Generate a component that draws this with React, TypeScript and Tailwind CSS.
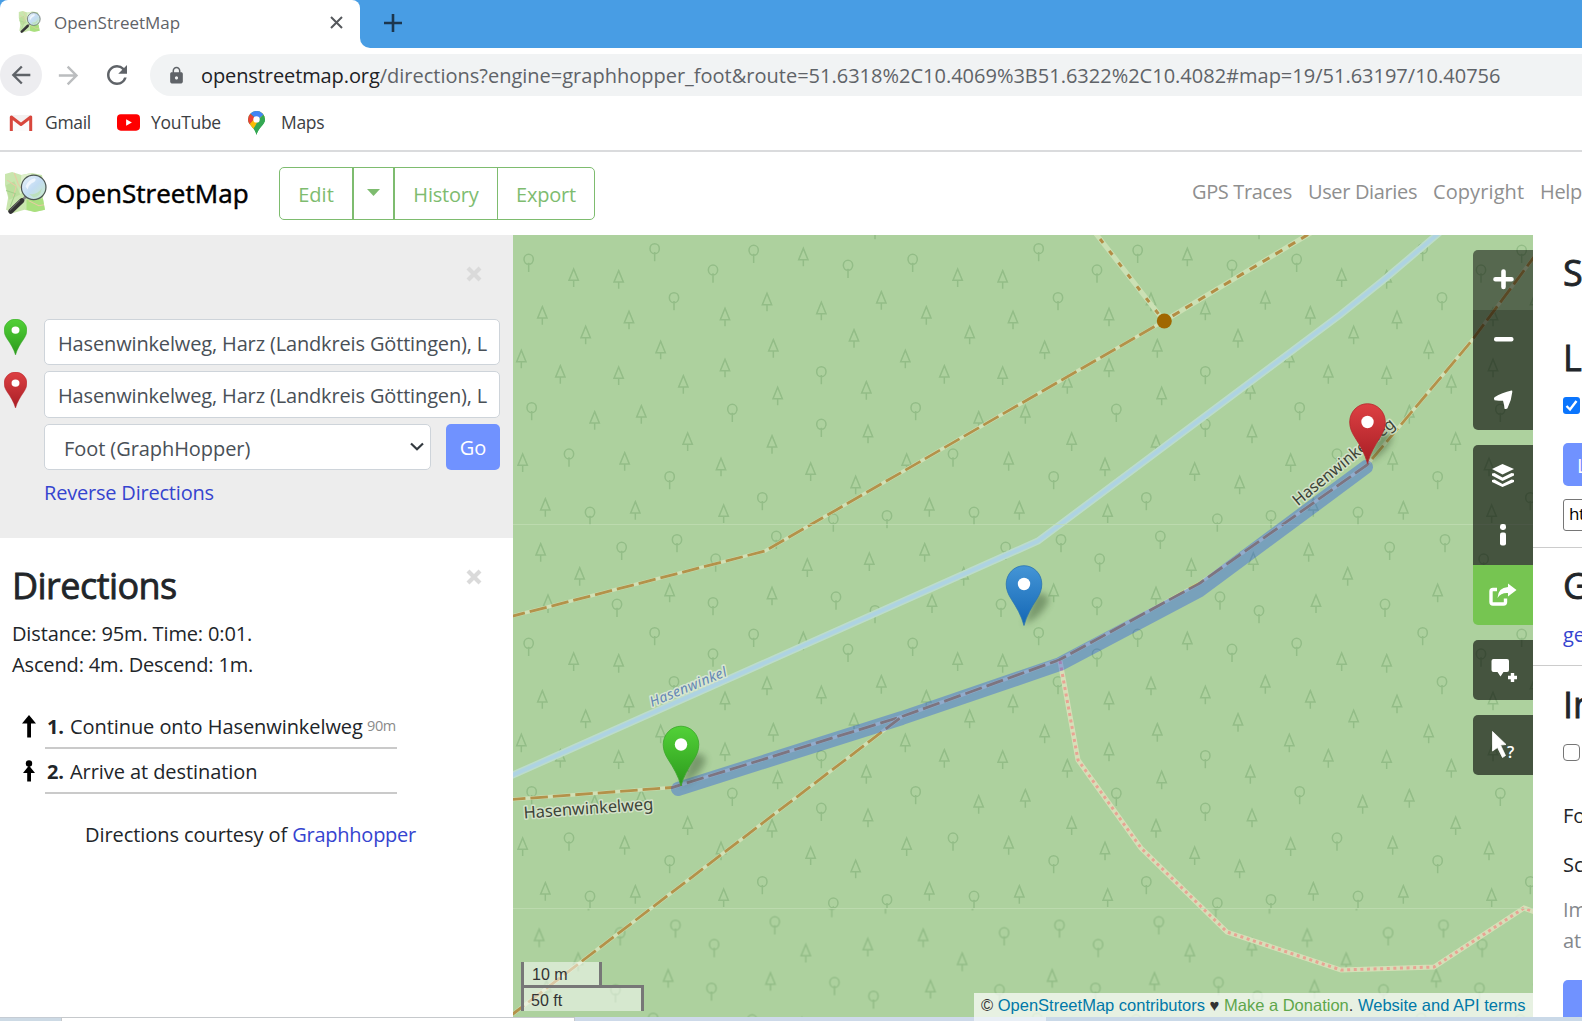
import type { ReactNode } from "react";
import { MdArrowBack, MdArrowForward, MdLock, MdRefresh } from "react-icons/md";

function OsmLogo({ className }: { className: string }) {
  return (
    <svg className={className} viewBox="0 0 42 43">
      <defs>
        <linearGradient id="osmLens" x1="0" y1="0" x2="1" y2="1">
          <stop offset="0" stopColor="#eaf3fb" />
          <stop offset=".5" stopColor="#c3dcf3" />
          <stop offset="1" stopColor="#c9ecc4" />
        </linearGradient>
      </defs>
      <path d="M1 2 L8 0 L17 3 L27 1 L37 3 L40 15 L38 26 L40 37 L30 39 L20 37 L9 40 L2 37 L4 25 L1 13 Z" fill="#c9e6ae" />
      <path d="M17 3 L27 1 L26 14 L15 22 Z" fill="#def0cc" />
      <path d="M2 13 L10 9 L16 22 L5 27 Z" fill="#bbdf9d" />
      <path d="M22 27 L38 26 L40 37 L30 39 L22 37 Z" fill="#a9e07e" />
      <path d="M3 8 L12 14 L9 24 M10 1 L14 12 L20 20 M24 28 L34 33 L39 32" stroke="#e9c9a4" strokeWidth="1" fill="none" />
      <path d="M2 18 L11 21 L6 34" stroke="#a3cf8b" strokeWidth="1" fill="none" />
      <path d="M21.500 24 L17 28.500" stroke="#888" strokeWidth="2.600" />
      <path d="M17.500 28 L6.500 38.500" stroke="#333" strokeWidth="4.800" strokeLinecap="round" />
      <path d="M15.500 27.500 L5.500 37.500" stroke="#6c6c6c" strokeWidth="1" />
      <circle cx="29" cy="15" r="12" fill="url(#osmLens)" stroke="#4c5653" strokeWidth="1.200" />
      <path d="M21 14 Q24 7 30 6 Q33 8 27 11 Q24 13 23 17 Z" fill="#f4f9ff" opacity=".85" />
      <path d="M24 21 Q31 24 37 16 Q36 24 29 25 Z" fill="#b9e0b4" opacity=".8" />
    </svg>
  );
}

const pinColors = {
  green: ["#52d138", "#2c9a1c", "#3aa62a"],
  red: ["#dd4043", "#a81e25", "#b5272c"],
  blue: ["#4495d6", "#1467b5", "#2a74b0"],
};
type PinColor = keyof typeof pinColors;

/* Teardrop marker whose tip sits at (18, 59) of its own coordinates. */
function PinShape({ color }: { color: PinColor }) {
  const [top, bottom, edge] = pinColors[color];
  return (
    <g>
      <defs>
        <linearGradient id={"pin-" + color} x1="0" y1="0" x2="0" y2="1">
          <stop offset="0" stopColor={top} />
          <stop offset="1" stopColor={bottom} />
        </linearGradient>
      </defs>
      <path
        d="M18 60 C15.500 50 10 41 5.500 34 C2 28.500 .2 24 .2 18.500 A17.800 18.300 0 0 1 35.800 18.500 C35.800 24 34 28.500 30.500 34 C26 41 20.500 50 18 60 Z"
        fill={"url(#pin-" + color + ")"}
        stroke={edge}
        strokeWidth=".8"
      />
      <circle cx="18" cy="18.500" r="6.200" fill="#fff" />
    </g>
  );
}

const broadleaf = [
  [50, 73], [428, 41], [603, 105], [725, 46], [1008, 91], [486, 188], [59, 518], [661, 523], [928, 410], [928, 568],
  [171, 657], [473, 725], [751, 788], [234, 832], [964, 852], [1125, 842], [495, 914], [329, 937], [793, 904],
  [611, 972], [315, 1108], [603, 1103], [972, 1086], [1089, 1127], [1089, -25],
];
const conifer = [
  [185, 98], [320, 103], [874, 36], [91, 211], [221, 270], [351, 225], [446, 315], [639, 216], [765, 171], [784, 310],
  [639, 369], [928, 198], [1108, 166], [1026, 280], [28, 342], [145, 388], [320, 392], [514, 418], [797, 453],
  [1063, 436], [248, 526], [388, 508], [527, 590], [780, 598], [1068, 567], [32, 653], [338, 649], [627, 666],
  [896, 680], [1031, 720], [100, 787], [370, 796], [635, 806], [86, 922], [203, 994], [1072, 950], [886, 968],
  [108, 1076], [473, 1044], [780, 1053],
];

function ForestPattern({ id, x, y }: { id: string; x: number; y: number }) {
  return (
    <pattern id={id} x={x} y={y} width="384" height="384" patternUnits="userSpaceOnUse">
      <g transform="scale(.33333)" fill="none" stroke="#93bd87" strokeWidth="4.600">
        {broadleaf.map(([cx, cy], i) => (
          <path key={i} d={`M${cx - 14} ${cy} a14 15 0 1 1 28 0 a14 15 0 1 1 -28 0 M${cx} ${cy + 10} v28`} />
        ))}
        {conifer.map(([cx, cy], i) => (
          <path key={i} d={`M${cx} ${cy + 4} L${cx + 14} ${cy + 38} H${cx - 14} Z M${cx} ${cy + 38} v20`} />
        ))}
      </g>
    </pattern>
  );
}

function MapMarker({ color, x, y }: { color: PinColor; x: number; y: number }) {
  return (
    <g>
      <path
        d={`M${x} ${y} L${x + 10} ${y - 30} Q${x + 22} ${y - 34} ${x + 25} ${y - 25} Q${x + 20} ${y - 9} ${x} ${y} Z`}
        fill="#2d4a25"
        opacity=".42"
        filter="url(#shade)"
      />
      <g transform={`translate(${x - 18} ${y - 59})`}>
        <PinShape color={color} />
      </g>
    </g>
  );
}

const trackA = "M505 618 L765 551 L1164 321";
const trackB = "M505 800 L672 787.500 L902 716.500 L1059 660 L1200 583 L1367 465 L1471.500 341 L1540 249";
const trackC = "M902 716.500 L505 1020";
const stream = "M505 778.500 L1038 541 L1340 315 L1386 278 L1446 227";
const footway = "M1060 661 L1078 760 L1141 848 L1227 932 L1341 970 L1434 967 L1524 908 L1540 914";

function MapCanvas() {
  return (
    <svg className="block h-[782px] w-[1020px]" viewBox="513 235 1020 782">
      <defs>
        <ForestPattern id="forest" x={512} y={235} />
        <ForestPattern id="forestLow" x={510.5} y={236.5} />
        <filter id="shade" x="-50%" y="-50%" width="200%" height="200%">
          <feGaussianBlur stdDeviation="3.500" />
        </filter>
      </defs>
      <rect x="513" y="235" width="1020" height="782" fill="#add19e" />
      <rect x="513" y="235" width="1020" height="673" fill="url(#forest)" />
      <rect x="513" y="908" width="1020" height="109" fill="url(#forestLow)" />

      <g fill="none">
        <path d={stream} stroke="#bcdccb" strokeWidth="7" />
        <path d={stream} stroke="#aed3e2" strokeWidth="3.800" />
        <path d="M1164 321 L1086 221" stroke="#cbe0b4" strokeWidth="5" />
        <path d="M1164 321 L1324 225" stroke="#cbe0b4" strokeWidth="5" />
        <path d="M1164 321 L1086 221" stroke="#b38d45" strokeWidth="3" strokeDasharray="5 10" strokeDashoffset="-9" />
        <path d="M1164 321 L1324 225" stroke="#b38d45" strokeWidth="3" strokeDasharray="8 7" strokeDashoffset="-10" />
        {[trackA, trackB, trackC].map((d) => (
          <g key={d}>
            <path d={d} stroke="#d0e0b6" strokeWidth="3.600" />
            <path d={d} stroke="#b3924a" strokeWidth="2.800" strokeDasharray="17.500 5" strokeDashoffset="-3" />
          </g>
        ))}
        <path d={footway} stroke="#d6dfb8" strokeWidth="5" />
        <path d={footway} stroke="#e8a493" strokeWidth="3" strokeDasharray="3 3.600" />
      </g>
      <circle cx="1164.300" cy="321" r="7.500" fill="#a06800" />

      <path d="M513 524.500 H1533 M513 908.500 H1533" stroke="#c3dfb6" strokeWidth="1" opacity=".7" />

      <g className="font-['Noto_Sans']" paintOrder="stroke" strokeLinejoin="round">
        <text transform="translate(652 707) rotate(-22.500)" fontSize="14" fontStyle="italic" textLength="82" fill="#6487b5" stroke="#d7e6d0" strokeWidth="3">
          Hasenwinkel
        </text>
        <text transform="translate(524 818.500) rotate(-4)" fontSize="16.500" textLength="130" fill="#3d4438" stroke="#d3e2c8" strokeWidth="3">
          Hasenwinkelweg
        </text>
        <text transform="translate(1298 506.500) rotate(-39.500)" fontSize="16" textLength="127" fill="#3d4438" stroke="#d3e2c8" strokeWidth="3">
          Hasenwinkelweg
        </text>
      </g>

      <path
        d="M678 789 L902 718 L1060 664 L1200 590 L1366 467"
        fill="none"
        stroke="#0033ff"
        strokeOpacity=".3"
        strokeWidth="14"
        strokeLinecap="round"
        strokeLinejoin="round"
      />
      <MapMarker color="blue" x={1024} y={624.5} />
      <MapMarker color="green" x={681} y={785} />
      <MapMarker color="red" x={1367.5} y={462.5} />
    </svg>
  );
}

function ControlIcon({ children }: { children: ReactNode }) {
  return (
    <svg className="h-[60px] w-[60px]" viewBox="0 0 60 60" fill="#fff">
      {children}
    </svg>
  );
}

function MapControls() {
  return (
    <div className="absolute top-[15px] right-0 flex w-[60px] flex-col gap-[15px]">
      <div className="flex flex-col overflow-hidden rounded-l-[5px]">
        <button className="h-[60px] bg-black/50">
          <ControlIcon>
            <path d="M30.500 21.500 V37 M22.500 29.200 H38.500" stroke="#fff" strokeWidth="4.600" strokeLinecap="round" />
          </ControlIcon>
        </button>
        <button className="h-[60px] bg-black/60">
          <ControlIcon>
            <rect x="21" y="27" width="19.500" height="4.600" rx="2" />
          </ControlIcon>
        </button>
        <button className="h-[60px] bg-black/60">
          <ControlIcon>
            <path d="M38.500 20.600 Q39.500 20.500 39.300 22 Q38.600 30 34.500 38.300 Q33.500 39.500 31.500 38.800 Q31.300 35 30 30.800 Q26 30.800 21.500 30.300 Q20.300 28.500 21.500 27.300 Q29 22.500 38.500 20.600 Z" />
          </ControlIcon>
        </button>
      </div>
      <div className="flex flex-col overflow-hidden rounded-l-[5px]">
        <button className="h-[60px] bg-black/60">
          <ControlIcon>
            <path d="M29.500 19 L41 24 L29.500 29.500 L19 24 Z" />
            <path d="M19 28.500 L21.500 28 L29.500 32.500 L38.500 28 L41 28.500 V30.500 L29.500 36 L19 30.500 Z" />
            <path d="M19 35 L21.500 34.500 L29.500 39 L38.500 34.500 L41 35 V37 L29.500 42 L19 37 Z" />
          </ControlIcon>
        </button>
        <button className="h-[60px] bg-black/60">
          <ControlIcon>
            <rect x="27" y="19" width="6" height="6" rx="2.400" />
            <rect x="27" y="27.500" width="6" height="13" rx="2" />
          </ControlIcon>
        </button>
        <button className="h-[60px] bg-[#76c551]">
          <ControlIcon>
            <path d="M24 24.500 H20 Q18 24.500 18 26.500 V37 Q18 39 20 39 H30.500 Q32.500 39 32.500 37 V33.500" fill="none" stroke="#fff" strokeWidth="3.400" />
            <path d="M35 18.500 L43.500 25 L35 31.500 V28 Q28 27.500 24.500 33 Q25 22.500 35 22 Z" />
          </ControlIcon>
        </button>
      </div>
      <button className="h-[60px] overflow-hidden rounded-l-[5px] bg-black/60">
        <ControlIcon>
          <path d="M20.500 19 H34 Q36 19 36 21 V30 Q36 32 34 32 H30.500 L27.500 36.500 L24.500 32 H20.500 Q18.500 32 18.500 30 V21 Q18.500 19 20.500 19 Z" />
          <path d="M39.500 33 V42 M35 37.500 H44" stroke="#fff" strokeWidth="3.400" />
        </ControlIcon>
      </button>
      <button className="h-[60px] overflow-hidden rounded-l-[5px] bg-black/60">
        <ControlIcon>
          <path d="M19.500 16.500 L33 29.500 L27.500 30 L32.500 40.500 L29.500 42.500 L24.500 32.500 L19.500 36 Z" stroke="#fff" strokeWidth=".8" />
          <text x="34" y="43" fontSize="16" fontWeight="600" className="font-['Open_Sans']">
            ?
          </text>
        </ControlIcon>
      </button>
    </div>
  );
}

function CloseIcon() {
  return (
    <svg className="h-[16px] w-[16px]" viewBox="0 0 16 16">
      <path d="M2 2 L14 14 M14 2 L2 14" stroke="#dadada" strokeWidth="4.200" />
    </svg>
  );
}

function SidePin({ color }: { color: PinColor }) {
  return (
    <svg className="ml-[4px] h-[36px] w-[23px] shrink-0" viewBox="0 0 36 60" preserveAspectRatio="none">
      <PinShape color={color} />
    </svg>
  );
}

function BrowserChrome() {
  return (
    <>
      <div className="flex h-[48px] bg-white">
        <div className="flex w-[360px] bg-[#489de4]">
          <div className="flex flex-1 items-center rounded-t-[8px] bg-white pb-[3px] pl-[18px]">
            <OsmLogo className="h-[23px] w-[23px]" />
            <span className="ml-[13px] text-[17px] text-[#5f6368]">OpenStreetMap</span>
            <svg className="ml-auto mr-[17px] h-[13px] w-[13px]" viewBox="0 0 13 13">
              <path d="M1 1 L12 12 M12 1 L1 12" stroke="#55585c" strokeWidth="2" />
            </svg>
          </div>
        </div>
        <div className="flex flex-1 items-center rounded-bl-[10px] bg-[#489de4] pb-[3px] pl-[24px]">
          <svg className="h-[18px] w-[18px]" viewBox="0 0 18 18">
            <path d="M9 0 V18 M0 9 H18" stroke="#1c364d" strokeWidth="2.600" />
          </svg>
        </div>
      </div>
      <div className="flex h-[54px] items-center text-[#5f6368]">
        <div className="flex h-[42px] w-[42px] items-center justify-center rounded-full bg-[#ededf0]">
          <MdArrowBack className="mr-[1px] h-[28px] w-[28px]" />
        </div>
        <MdArrowForward className="ml-[12px] h-[29px] w-[29px] text-[#bbbdbf]" />
        <MdRefresh className="ml-[19px] h-[30px] w-[30px]" />
        <div className="ml-[18px] flex h-[42px] flex-1 items-center rounded-l-full bg-[#f1f3f4] pl-[17px]">
          <MdLock className="h-[19px] w-[19px]" />
          <span className="ml-[15px] pt-[2px] text-[20px] whitespace-nowrap">
            <span className="tracking-[-0.1px] text-[#202124]">openstreetmap.org</span>
            /directions?engine=graphhopper_foot&amp;route=51.6318%2C10.4069%3B51.6322%2C10.4082#map=19/51.63197/10.40756
          </span>
        </div>
      </div>
      <div className="flex h-[50px] items-center border-b-2 border-[#dadbdd] pb-[7px] pl-[9px] text-[17.5px] tracking-[-0.3px] text-[#3c4043]">
        <svg className="h-[18px] w-[24px]" viewBox="0 0 24 18">
          <rect x="1" y="1" width="22" height="16" rx="1.500" fill="#f3f1f1" />
          <path d="M4 17 V6 L12 12 L20 6 V17" fill="#fbfbfb" />
          <path d="M2.300 17 V3 L12 10.500 L21.700 3 V17" fill="none" stroke="#d8473d" strokeWidth="3" strokeLinejoin="round" />
        </svg>
        <span className="ml-[12px] w-[48px]">Gmail</span>
        <svg className="ml-[24px] h-[17px] w-[23px]" viewBox="0 0 24 17">
          <rect width="24" height="17" rx="4" fill="#f00" />
          <path d="M9.500 5 L15.500 8.500 L9.500 12 Z" fill="#fff" />
        </svg>
        <span className="ml-[11px] w-[70px]">YouTube</span>
        <svg className="ml-[27px] h-[24px] w-[17px]" viewBox="0 0 17 24">
          <defs>
            <clipPath id="mapsPin">
              <path d="M8.500 0 A8.500 8.500 0 0 1 17 8.500 C17 14 10.500 16 8.500 24 C6.500 16 0 14 0 8.500 A8.500 8.500 0 0 1 8.500 0 Z" />
            </clipPath>
          </defs>
          <g clipPath="url(#mapsPin)">
            <rect width="17" height="24" fill="#34a853" />
            <path d="M0 14 L17 -3 V6 L3 20 H0 Z" fill="#fbbc04" />
            <path d="M2 2 L9 9 L17 3 V-2 H0 Z" fill="#4285f4" />
            <path d="M0 0 L2 2.500 L7 7 L0 15 Z" fill="#ea4335" />
            <path d="M11 8 L17 2 V13 L8.500 24 L6 17 Z" fill="#34a853" />
          </g>
          <circle cx="8.500" cy="8.400" r="3.200" fill="#fff" />
        </svg>
        <span className="ml-[16px]">Maps</span>
      </div>
    </>
  );
}

function SiteHeader() {
  return (
    <header className="flex h-[83px] shrink-0 items-center pl-[4px]">
      <OsmLogo className="h-[44px] w-[43px] shrink-0" />
      <h1 className="ml-[8px] w-[224px] shrink-0 text-[26px] tracking-[0.05px] text-black [-webkit-text-stroke:0.5px_#000]">OpenStreetMap</h1>
      <div className="flex h-[53px] w-[316px] shrink-0 rounded-[5px] border-[1.500px] border-[#7ebc6f] text-[20px] text-[#7ebc6f]">
        <button className="w-[74px] border-r-2 border-[#7ebc6f] pt-[2px]">Edit</button>
        <button className="flex w-[41px] items-center justify-center border-r-2 border-[#7ebc6f] pb-[2px]">
          <svg className="h-[7px] w-[13px]" viewBox="0 0 13 7">
            <path d="M0 0 H13 L6.500 7 Z" fill="#7ebc6f" />
          </svg>
        </button>
        <button className="w-[103px] border-r border-[#7ebc6f] pt-[2px] tracking-[-0.2px]">History</button>
        <button className="flex-1 pt-[2px] tracking-[-0.2px]">Export</button>
      </div>
      <nav className="ml-[597px] flex w-[390px] shrink-0 gap-[16px] overflow-hidden pb-[4px] text-[20px] whitespace-nowrap text-[#8f8f8f]">
        <a className="w-[100px] tracking-[-0.35px]">GPS Traces</a>
        <a className="w-[109px] tracking-[-0.35px]">User Diaries</a>
        <a className="w-[91px] tracking-[0.1px]">Copyright</a>
        <a className="tracking-[-0.3px]">Help</a>
      </nav>
    </header>
  );
}

function Sidebar() {
  return (
    <aside className="w-[513px] shrink-0 text-[20px] tracking-[-0.07px] whitespace-nowrap text-[#212529]">
      <div className="h-[303px] bg-[#ededed]">
        <div className="flex h-[84px] items-center justify-end pr-[31px] pb-[6px]">
          <CloseIcon />
        </div>
        <div className="flex h-[46px]">
          <SidePin color="green" />
          <div className="ml-[17px] flex w-[456px] items-center rounded-[5px] border-[1.500px] border-[#ced4da] bg-white px-[13px] pt-[3px] tracking-[-0.15px] text-[#495057]">
            Hasenwinkelweg, Harz (Landkreis Göttingen), L
          </div>
        </div>
        <div className="mt-[6px] flex h-[47px] items-start">
          <div className="flex pt-[1px]">
            <SidePin color="red" />
          </div>
          <div className="ml-[17px] flex h-[47px] w-[456px] items-center rounded-[5px] border-[1.500px] border-[#ced4da] bg-white px-[13px] pt-[3px] tracking-[-0.15px] text-[#495057]">
            Hasenwinkelweg, Harz (Landkreis Göttingen), L
          </div>
        </div>
        <div className="mt-[6px] ml-[44px] flex h-[46px]">
          <div className="flex w-[387px] items-center justify-between rounded-[5px] border-[1.500px] border-[#ced4da] bg-white pr-[6px] pl-[19px] text-[#495057]">
            <span className="pt-[4px]">Foot (GraphHopper)</span>
            <svg className="mt-[-1px] h-[9px] w-[14px]" viewBox="0 0 14 9">
              <path d="M1 1.500 L7 7.300 L13 1.500" fill="none" stroke="#343a40" strokeWidth="2.200" />
            </svg>
          </div>
          <button className="ml-[15px] w-[54px] rounded-[5px] bg-[#7092ff] pt-[2px] text-white">Go</button>
        </div>
        <a className="mt-[8px] ml-[44px] block leading-[30px] tracking-[-0.2px] text-[#3544cf]">Reverse Directions</a>
      </div>
      <div className="pt-[24px]">
        <div className="flex h-[44px] justify-between pr-[31px] pl-[12px]">
          <h2 className="pt-[2px] text-[36px] leading-[44px] tracking-[-0.55px] [-webkit-text-stroke:0.8px_#212529]">Directions</h2>
          <div className="pt-[7px]">
            <CloseIcon />
          </div>
        </div>
        <p className="mt-[12px] pl-[12px] leading-[31px] tracking-[-0.14px]">
          Distance: 95m. Time: 0:01.
          <br />
          Ascend: 4m. Descend: 1m.
        </p>
        <ol className="mt-[24px] ml-[20px] w-[377px]">
          <li className="flex">
            <div className="flex w-[25px] items-center">
              <svg className="h-[24px] w-[17px]" viewBox="0 0 17 24">
                <path d="M9 0 L16 8.500 H11 V22.500 H7.200 V8.500 H2 Z" fill="#000" />
              </svg>
            </div>
            <div className="flex h-[45px] flex-1 items-center border-b-2 border-[#cacaca] pt-[2px] pl-[2px]">
              <b className="w-[23px]">1.</b>
              <span className="w-[297px]">Continue onto Hasenwinkelweg</span>
              <span className="pb-[2px] text-[14.5px]/[20px] tracking-[-0.4px] text-[#8a8a8a]">90m</span>
            </div>
          </li>
          <li className="flex">
            <div className="flex w-[25px] items-center">
              <svg className="h-[24px] w-[17px]" viewBox="0 0 17 24">
                <circle cx="9" cy="3.500" r="3.200" fill="#000" />
                <path d="M9 5.500 L15 13 H11 V21.500 H7.200 V13 H3 Z" fill="#000" />
              </svg>
            </div>
            <div className="flex h-[45px] flex-1 items-center border-b-2 border-[#cacaca] pt-[2px] pl-[2px]">
              <b className="w-[23px]">2.</b>
              <span>Arrive at destination</span>
            </div>
          </li>
        </ol>
        <p className="mt-[26px] pl-[85px] leading-[30px]">
          Directions courtesy of <a className="tracking-[-0.25px] text-[#3544cf]">Graphhopper</a>
        </p>
      </div>
    </aside>
  );
}

function SharePanel() {
  return (
    <aside className="flex w-[49px] flex-col overflow-hidden whitespace-nowrap text-[#212529]">
      <div className="h-[312.5px] shrink-0 border-b-[1.500px] border-[#ccc] pt-[16px] pl-[30px]">
        <h2 className="text-[36px] leading-[44px] [-webkit-text-stroke:0.8px_#212529]">S</h2>
        <h3 className="mt-[41px] text-[36px] leading-[44px] [-webkit-text-stroke:0.8px_#212529]">L</h3>
        <div className="mt-[17px] flex h-[17px] w-[17px] items-center justify-center rounded-[3px] bg-[#0b75fd]">
          <svg className="h-[13px] w-[13px]" viewBox="0 0 13 13">
            <path d="M1.500 7 L5 10.500 L11.500 2" fill="none" stroke="#fff" strokeWidth="2.400" />
          </svg>
        </div>
        <div className="mt-[29px] flex h-[43px] w-[100px] items-center rounded-[5px] bg-[#7092ff] pt-[2px] pl-[14px] text-[20px] text-white">L</div>
        <div className="mt-[13px] flex h-[32px] w-[100px] items-center rounded-[3px] border-[1.500px] border-[#767676] pb-[2px] pl-[5px] text-[17px] tracking-[-0.5px] text-black">ht</div>
      </div>
      <div className="h-[118px] shrink-0 border-b-[1.500px] border-[#ccc] pt-[16px] pl-[30px]">
        <h3 className="text-[36px] leading-[44px] [-webkit-text-stroke:0.8px_#212529]">G</h3>
        <p className="mt-[12px] text-[20px] leading-[30px] text-[#3544cf]">ge</p>
      </div>
      <div className="pt-[17px] pl-[30px] text-[20px] leading-[30px]">
        <h3 className="text-[36px] leading-[44px] [-webkit-text-stroke:0.8px_#212529]">Im</h3>
        <div className="mt-[17px] h-[17px] w-[17px] rounded-[4px] border-[1.500px] border-[#767676]" />
        <p className="mt-[40px]">Fo</p>
        <p className="mt-[19px]">Sc</p>
        <p className="mt-[14px] leading-[31px] text-[#84888c]">
          Im
          <br />
          at
        </p>
        <div className="mt-[24px] h-[50px] w-[100px] rounded-[5px] bg-[#7092ff]" />
      </div>
    </aside>
  );
}

export default function App() {
  return (
    <div className="flex h-[1021px] w-[1582px] flex-col overflow-hidden bg-white font-['Open_Sans',sans-serif]">
      <BrowserChrome />
      <SiteHeader />
      <main className="flex h-[782px] shrink-0 overflow-hidden">
        <Sidebar />
        <section className="relative w-[1020px] shrink-0">
          <MapCanvas />
          <MapControls />
          <div className="absolute bottom-[6px] left-[8px] flex flex-col items-start font-['Liberation_Sans',sans-serif] text-[16px] text-[#333]">
            <div className="h-[23px] w-[81px] border-x-[3px] border-[#777] bg-white/50 pl-[8px] leading-[25px]">10 m</div>
            <div className="h-[26px] w-[123px] border-x-[3px] border-t-[3px] border-[#777] bg-white/50 pl-[7px] leading-[26px]">50 ft</div>
          </div>
          <div className="absolute right-0 bottom-0 h-[24px] w-[559px] bg-white/70 pl-[7px] font-['Liberation_Sans',sans-serif] text-[16.5px] leading-[24px] whitespace-nowrap text-[#333]">
            © <a className="text-[#0078a8]">OpenStreetMap contributors</a> ♥ <a className="text-[#5ea64b]">Make a Donation</a>.{" "}
            <a className="text-[#0078a8]">Website and API terms</a>
          </div>
        </section>
        <SharePanel />
      </main>
      <footer className="flex h-[4px] shrink-0 bg-[#cad9e8]">
        <div className="w-[61px] border-t border-[#c5ccd4] bg-[#cddae5]" />
        <div className="w-[514px] border-x border-t border-[#c6c9cc] bg-white" />
        <div className="w-[399px] bg-[#cdd9e9]" />
        <div className="w-[72px] bg-[#e9eff6]" />
      </footer>
    </div>
  );
}
